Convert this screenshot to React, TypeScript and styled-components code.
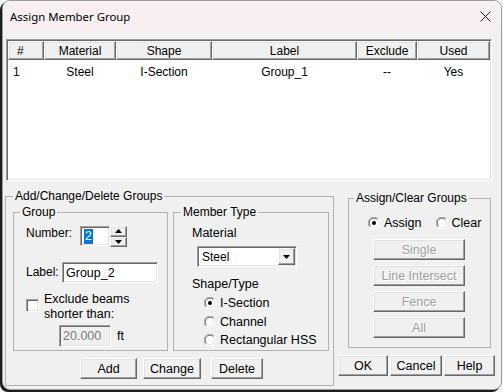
import styled, { createGlobalStyle, css } from 'styled-components';

const GlobalStyle = createGlobalStyle`
  html, body {
    margin: 0;
    padding: 0;
    background: #f3f3f3;
  }
  body {
    font-family: "Liberation Sans", Arial, sans-serif;
    font-size: 12px;
    color: #000;
  }
  * {
    box-sizing: border-box;
  }
`;

const sunken = css`
  border: 1px solid;
  border-color: #a0a0a0 #fff #fff #a0a0a0;
  box-shadow: inset 1px 1px 0 #696969, inset -1px -1px 0 #e3e3e3;
`;

const raised = css`
  border: 1px solid;
  border-color: #fff #696969 #696969 #fff;
  box-shadow: inset -1px -1px 0 #a0a0a0, inset 1px 1px 0 #e3e3e3;
`;

const columns = [
  { title: '#', width: 36 },
  { title: 'Material', width: 72 },
  { title: 'Shape', width: 96 },
  { title: 'Label', width: 145 },
  { title: 'Exclude', width: 60 },
  { title: 'Used', width: 73 },
];

const rows = [['1', 'Steel', 'I-Section', 'Group_1', '--', 'Yes']];

const Radio = ({ checked }: { checked?: boolean }) => (
  <RadioMark width="12" height="12" viewBox="0 0 12 12">
    <circle cx="6" cy="6" r="5.5" fill="#fff" />
    <path d="M1.8 10.2 A5.5 5.5 0 0 1 10.2 1.8" stroke="#a0a0a0" fill="none" />
    <path d="M2.6 9.4 A4.5 4.5 0 0 1 9.4 2.6" stroke="#696969" fill="none" />
    <path d="M10.2 1.8 A5.5 5.5 0 0 1 1.8 10.2" stroke="#fff" fill="none" />
    <path d="M9.4 2.6 A4.5 4.5 0 0 1 2.6 9.4" stroke="#e3e3e3" fill="none" />
    {checked && <circle cx="6" cy="6" r="2" fill="#000" />}
  </RadioMark>
);

const Triangle = ({ up }: { up?: boolean }) => (
  <svg width="7" height="4" viewBox="0 0 7 4">
    <path d={up ? 'M0 4 L3.5 0 L7 4 Z' : 'M0 0 L7 0 L3.5 4 Z'} fill="#000" />
  </svg>
);

const App = () => {
  return (
    <Page>
      <GlobalStyle />
      <Window>
        <TitleBar>
          <Title>Assign Member Group</Title>
          <svg width="11" height="11" viewBox="0 0 11 11">
            <path d="M0.5 0.5 L10.5 10.5 M10.5 0.5 L0.5 10.5" stroke="#1a1a1a" strokeWidth="1" />
          </svg>
        </TitleBar>
        <Body>
          <ListView>
            <HeaderRow>
              {columns.map((c, i) => (
                <HeaderCell key={c.title} $width={c.width} $left={i === 0}>
                  {c.title}
                </HeaderCell>
              ))}
            </HeaderRow>
            {rows.map((r) => (
              <DataRow key={r[0]}>
                {r.map((v, i) => (
                  <DataCell key={i} $width={columns[i].width} $left={i === 0}>
                    {v}
                  </DataCell>
                ))}
              </DataRow>
            ))}
          </ListView>

          <BottomRow>
            <Frame $width={329} $height={197} $top={8}>
              <Caption $indent={7}>Add/Change/Delete Groups</Caption>
              <FrameBody $pad="1px 4px 0 7px">
                <FrameRow>
                  <Frame $width={155} $height={146}>
                    <Caption $indent={6}>Group</Caption>
                    <FrameBody $pad="0 0 0 12px">
                      <FieldRow $top={6}>
                        <FieldLabel $width={54}>Number:</FieldLabel>
                        <SpinEdit>
                          <EditBox $width={30} $height={20}>
                            <Selected>2</Selected>
                          </EditBox>
                          <SpinButtons>
                            <SpinButton>
                              <Triangle up />
                            </SpinButton>
                            <SpinButton>
                              <Triangle />
                            </SpinButton>
                          </SpinButtons>
                        </SpinEdit>
                      </FieldRow>
                      <FieldRow $top={15} $center>
                        <FieldLabel $width={36}>Label:</FieldLabel>
                        <EditBox $width={96} $height={21}>Group_2</EditBox>
                      </FieldRow>
                      <CheckRow>
                        <CheckBox />
                        <CheckText>
                          Exclude beams
                          <br />
                          shorter than:
                        </CheckText>
                      </CheckRow>
                      <FieldRow $top={3} $center $indent={33}>
                        <EditBox $width={52} $height={22} $disabled>
                          20.000
                        </EditBox>
                        <Unit>ft</Unit>
                      </FieldRow>
                    </FrameBody>
                  </Frame>
                  <Frame $width={156} $height={146}>
                    <Caption $indent={7}>Member Type</Caption>
                    <FrameBody $pad="0 0 0 18px">
                      <Text $top={6}>Material</Text>
                      <Select>
                        <span>Steel</span>
                        <DropButton>
                          <Triangle />
                        </DropButton>
                      </Select>
                      <Text $top={10}>Shape/Type</Text>
                      <RadioList>
                        <RadioRow>
                          <Radio checked />
                          I-Section
                        </RadioRow>
                        <RadioRow>
                          <Radio />
                          Channel
                        </RadioRow>
                        <RadioRow>
                          <Radio />
                          Rectangular HSS
                        </RadioRow>
                      </RadioList>
                    </FrameBody>
                  </Frame>
                </FrameRow>
                <ButtonRow $indent={67}>
                  <Button $width={57}>Add</Button>
                  <Button $width={58} $gap={6}>
                    Change
                  </Button>
                  <Button $width={52} $gap={10}>
                    Delete
                  </Button>
                </ButtonRow>
              </FrameBody>
            </Frame>

            <RightColumn>
              <Frame $width={143} $height={157} $top={10} $left={10}>
                <Caption $indent={5}>Assign/Clear Groups</Caption>
                <FrameBody $pad="0 0 0 19px">
                  <ModeRow>
                    <ModeOption>
                      <Radio checked />
                      Assign
                    </ModeOption>
                    <ModeOption>
                      <Radio />
                      Clear
                    </ModeOption>
                  </ModeRow>
                  <ActionList>
                    <Button $width={92} $disabled>
                      Single
                    </Button>
                    <Button $width={92} $disabled>
                      Line Intersect
                    </Button>
                    <Button $width={92} $disabled>
                      Fence
                    </Button>
                    <Button $width={92} $disabled>
                      All
                    </Button>
                  </ActionList>
                </FrameBody>
              </Frame>
              <ButtonRow>
                <Button $width={50}>OK</Button>
                <Button $width={52} $gap={2}>
                  Cancel
                </Button>
                <Button $width={51} $gap={2}>
                  Help
                </Button>
              </ButtonRow>
            </RightColumn>
          </BottomRow>
        </Body>
      </Window>
    </Page>
  );
};

const Page = styled.div`
  width: 503px;
  height: 392px;
  overflow: hidden;
  padding-left: 2px;
`;

const Window = styled.div`
  width: 500px;
  height: 390px;
  border: 1px solid #9c9c9c;
  border-radius: 8px;
  background: #f0f0f0;
  overflow: hidden;
  display: flex;
  flex-direction: column;
  box-shadow: -2px 2px 0 #1c1c1c;
`;

const TitleBar = styled.div`
  height: 30px;
  flex-shrink: 0;
  background: #f7eff2;
  display: flex;
  align-items: center;
  justify-content: space-between;
  padding: 0 10px 0 7px;
`;

const Title = styled.span`
  font-family: "Noto Sans", "Open Sans", sans-serif;
  font-size: 11.4px;
  color: #000;
`;

const Body = styled.div`
  padding: 8px 0 0 2px;
`;

const ListView = styled.div`
  ${sunken};
  width: 486px;
  height: 142px;
  margin-left: 1px;
  padding: 1px;
  background: #fff;
`;

const HeaderRow = styled.div`
  display: flex;
  height: 19px;
  background: #f0f0f0;
`;

const HeaderCell = styled.div<{ $width: number; $left?: boolean }>`
  ${raised};
  width: ${(p) => p.$width}px;
  display: flex;
  align-items: center;
  justify-content: ${(p) => (p.$left ? 'flex-start' : 'center')};
  padding-left: ${(p) => (p.$left ? '8px' : '0')};
`;

const DataRow = styled.div`
  display: flex;
  height: 18px;
  margin-top: 3px;
  align-items: center;
`;

const DataCell = styled.div<{ $width: number; $left?: boolean }>`
  width: ${(p) => p.$width}px;
  text-align: ${(p) => (p.$left ? 'left' : 'center')};
  padding-left: ${(p) => (p.$left ? '5px' : '0')};
`;

const BottomRow = styled.div`
  display: flex;
  align-items: flex-start;
`;

const Frame = styled.fieldset<{ $width: number; $height: number; $top?: number; $left?: number }>`
  margin: ${(p) => p.$top ?? 0}px 0 0 ${(p) => p.$left ?? 0}px;
  padding: 0;
  min-width: 0;
  width: ${(p) => p.$width}px;
  height: ${(p) => p.$height}px;
  border: 1px solid #b1b1b1;
`;

const Caption = styled.legend<{ $indent: number }>`
  margin-left: ${(p) => p.$indent}px;
  padding: 0 2px;
  line-height: 15px;
`;

const FrameBody = styled.div<{ $pad: string }>`
  padding: ${(p) => p.$pad};
`;

const FrameRow = styled.div`
  display: flex;
  gap: 5px;
`;

const FieldRow = styled.div<{ $top: number; $center?: boolean; $indent?: number }>`
  display: flex;
  align-items: ${(p) => (p.$center ? 'center' : 'flex-start')};
  margin-top: ${(p) => p.$top}px;
  margin-left: ${(p) => p.$indent ?? 0}px;
`;

const FieldLabel = styled.span<{ $width: number }>`
  width: ${(p) => p.$width}px;
  line-height: 15px;
`;

const EditBox = styled.div<{ $width: number; $height: number; $disabled?: boolean }>`
  ${sunken};
  width: ${(p) => p.$width}px;
  height: ${(p) => p.$height}px;
  background: ${(p) => (p.$disabled ? '#f0f0f0' : '#fff')};
  color: ${(p) => (p.$disabled ? '#7a7a7a' : '#000')};
  display: flex;
  align-items: center;
  padding-left: 3px;
  font-size: 12.5px;
`;

const Selected = styled.span`
  background: #0078d7;
  color: #fff;
  line-height: 15px;
  padding: 0 1px;
`;

const SpinEdit = styled.div`
  display: flex;
`;

const SpinButtons = styled.div`
  display: flex;
  flex-direction: column;
`;

const SpinButton = styled.div`
  ${raised};
  width: 17px;
  height: 10.5px;
  display: flex;
  align-items: center;
  justify-content: center;
  background: #f0f0f0;
`;

const CheckRow = styled.div`
  display: flex;
  align-items: flex-start;
  gap: 5px;
  margin-top: 9px;
`;

const CheckBox = styled.div`
  ${sunken};
  width: 13px;
  height: 13px;
  margin-top: 7px;
  background: #fff;
  flex-shrink: 0;
`;

const CheckText = styled.div`
  line-height: 15px;
  font-size: 12.5px;
`;

const Unit = styled.span`
  margin-left: 6px;
  font-size: 12.5px;
`;

const Text = styled.div<{ $top: number }>`
  margin-top: ${(p) => p.$top}px;
  line-height: 15px;
  font-size: 12.5px;
`;

const Select = styled.div`
  ${sunken};
  width: 100px;
  height: 21px;
  margin: 5px 0 0 5px;
  background: #fff;
  display: flex;
  align-items: center;
  justify-content: space-between;
  padding: 0 1px 0 4px;
`;

const DropButton = styled.div`
  ${raised};
  width: 17px;
  height: 17px;
  background: #f0f0f0;
  display: flex;
  align-items: center;
  justify-content: center;
`;

const RadioList = styled.div`
  display: flex;
  flex-direction: column;
  margin: 2px 0 0 12px;
`;

const RadioRow = styled.label`
  display: flex;
  align-items: center;
  gap: 4px;
  height: 18.5px;
  font-size: 12.5px;
`;

const RadioMark = styled.svg`
  flex-shrink: 0;
`;

const ButtonRow = styled.div<{ $indent?: number }>`
  display: flex;
  margin-top: 7px;
  padding-left: ${(p) => p.$indent ?? 0}px;
`;

const Button = styled.div<{ $width: number; $gap?: number; $disabled?: boolean }>`
  ${raised};
  width: ${(p) => p.$width}px;
  height: 21px;
  margin-left: ${(p) => p.$gap ?? 0}px;
  background: #f0f0f0;
  display: flex;
  align-items: center;
  justify-content: center;
  font-size: 12.5px;
  color: ${(p) => (p.$disabled ? '#a0a0a0' : '#000')};
  text-shadow: ${(p) => (p.$disabled ? '1px 1px 0 #fff' : 'none')};
`;

const RightColumn = styled.div`
  display: flex;
  flex-direction: column;
  margin-left: 4px;
`;

const ModeRow = styled.div`
  display: flex;
  gap: 14px;
  margin-top: 9px;
  height: 16px;
  align-items: center;
`;

const ModeOption = styled.label`
  display: flex;
  align-items: center;
  gap: 4px;
  font-size: 12.5px;
`;

const ActionList = styled.div`
  display: flex;
  flex-direction: column;
  gap: 5px;
  margin: 8px 0 0 5px;
`;

export default App;
